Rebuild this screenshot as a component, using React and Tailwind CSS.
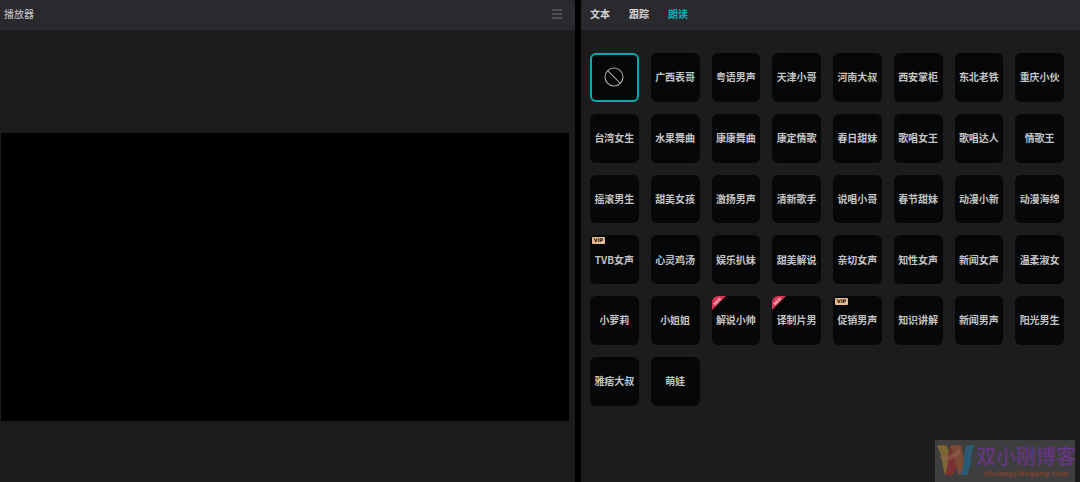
import { useState } from "react";
import clsx from "clsx";

const TABS = ["文本", "跟踪", "朗读"];

const VOICES = [
    { name: "无", none: true },
    { name: "广西表哥" },
    { name: "粤语男声" },
    { name: "天津小哥" },
    { name: "河南大叔" },
    { name: "西安掌柜" },
    { name: "东北老铁" },
    { name: "重庆小伙" },
    { name: "台湾女生" },
    { name: "水果舞曲" },
    { name: "康康舞曲" },
    { name: "康定情歌" },
    { name: "春日甜妹" },
    { name: "歌唱女王" },
    { name: "歌唱达人" },
    { name: "情歌王" },
    { name: "摇滚男生" },
    { name: "甜美女孩" },
    { name: "激扬男声" },
    { name: "清新歌手" },
    { name: "说唱小哥" },
    { name: "春节甜妹" },
    { name: "动漫小新" },
    { name: "动漫海绵" },
    { name: "TVB女声", badge: "vip" },
    { name: "心灵鸡汤" },
    { name: "娱乐扒妹" },
    { name: "甜美解说" },
    { name: "亲切女声" },
    { name: "知性女声" },
    { name: "新闻女声" },
    { name: "温柔淑女" },
    { name: "小萝莉" },
    { name: "小姐姐" },
    { name: "解说小帅", badge: "new" },
    { name: "译制片男", badge: "new" },
    { name: "促销男声", badge: "vip" },
    { name: "知识讲解" },
    { name: "新闻男声" },
    { name: "阳光男生" },
    { name: "雅痞大叔" },
    { name: "萌娃" },
];

function NoneIcon() {
    return (
        <svg viewBox="0 0 20 20" className="size-5" fill="none" stroke="#a8a8a9" strokeWidth="1.1" aria-hidden="true">
            <circle cx="10" cy="10" r="9" />
            <path d="M3.6 3.6 16.4 16.4" />
        </svg>
    );
}

function VipBadge() {
    return (
        <span className="absolute top-0.5 left-0.5 flex h-[7px] w-[13px] items-center justify-center rounded-[1px] bg-[#e6bd92] font-['DejaVu_Sans'] text-[5px] leading-none font-bold text-[#1c1208]">
            VIP
        </span>
    );
}

function NewBadge() {
    return (
        <span className="absolute top-0 left-0 size-[14px]">
            <svg viewBox="0 0 14 14" className="absolute inset-0 size-full" aria-hidden="true">
                <path d="M3 0H14L0 14V3Q0 0 3 0Z" fill="#d63456" />
            </svg>
            <span className="absolute top-0 left-0 flex size-[10px] -rotate-45 items-center justify-center text-[4px] leading-none font-bold text-[#f7d3da]">
                NEW
            </span>
        </span>
    );
}

function VoiceTile({ voice, selected, onSelect }) {
    return (
        <button
            type="button"
            aria-label={voice.name}
            aria-pressed={selected}
            onClick={onSelect}
            className={clsx(
                "relative flex aspect-square items-center justify-center overflow-hidden rounded-md bg-[#060709] text-[10px] leading-4 font-bold whitespace-nowrap text-[#c4c4c4]",
                selected && "border-2 border-[#0aa9b1]"
            )}
        >
            {voice.badge === "vip" && <VipBadge />}
            {voice.badge === "new" && <NewBadge />}
            {voice.none ? <NoneIcon /> : voice.name}
        </button>
    );
}

function Watermark() {
    return (
        <div className="absolute right-[5px] bottom-0 flex h-[42px] w-[140px] overflow-hidden bg-[#3e3e3e] pl-px">
            <svg viewBox="0 0 40 42" className="h-[42px] w-10 shrink-0" aria-hidden="true">
                <path d="M1 6Q6 4 11 6C14 14 14 26 17 35H9C6 25 6 14 1 6Z" fill="#7a6632" />
                <path d="M14 6Q20 4 26 6C22 15 22 27 17 35H9C13 26 11 15 14 6Z" fill="#7a3034" />
                <path d="M14 6Q20 4 25 6C27 14 29 26 31 35H23C19 26 19 14 14 6Z" fill="#7c4a32" />
                <path d="M30 6Q34 4 38 5C34 14 36 26 31 35H24C29 26 27 14 30 6Z" fill="#2b5a74" />
                <path d="M3 16Q13 19 24 8L24 14Q16 22 6 20Z" fill="#946650" opacity="0.5" />
            </svg>
            <div className="flex flex-col items-center pt-1 whitespace-nowrap">
                <span className="text-[20px] leading-6 font-medium text-[#653582]">双小刚博客</span>
                <span className="font-['DejaVu_Sans'] text-[7px] leading-3 font-bold text-[#7a4230]">
                    shuangxiaogang.com
                </span>
            </div>
        </div>
    );
}

export default function App() {
    const [tab, setTab] = useState("朗读");
    const [selected, setSelected] = useState("无");

    return (
        <div className="relative grid min-h-screen grid-cols-[575fr_499fr] gap-1.5 bg-black font-['Noto_Sans_CJK_SC',sans-serif]">
            <section className="flex min-w-0 flex-col bg-[#1c1c1c]">
                <header className="flex h-[30px] items-center justify-between rounded-tr-sm bg-[#29292e] pr-3 pb-0.5 pl-1">
                    <h2 className="text-[10px] leading-4 text-[#c9c9cb]">播放器</h2>
                    <button type="button" aria-label="菜单" className="text-[#737377]">
                        <svg viewBox="0 0 12 10" className="h-[10px] w-3" stroke="currentColor" strokeWidth="1" aria-hidden="true">
                            <path d="M1 1H11M1 5H11M1 9H11" />
                        </svg>
                    </button>
                </header>
                <div className="flex flex-1 items-center pt-[42px] pr-1.5 pl-px">
                    <div className="aspect-[71/36] w-full bg-black" />
                </div>
            </section>

            <section className="min-w-0 bg-[#1c1c1c]">
                <nav className="flex h-[30px] items-center gap-[19px] rounded-tl-sm bg-[#29292e] pb-0.5 pl-[9px]">
                    {TABS.map((item) => (
                        <button
                            key={item}
                            type="button"
                            onClick={() => setTab(item)}
                            className={clsx(
                                "text-[10px] leading-4 font-bold",
                                item === tab ? "text-[#0cb0b8]" : "text-[#d6d6d8]"
                            )}
                        >
                            {item}
                        </button>
                    ))}
                </nav>
                <div className="grid grid-cols-8 gap-3 pt-[23px] pr-4 pb-6 pl-[9px]">
                    {VOICES.map((voice) => (
                        <VoiceTile
                            key={voice.name}
                            voice={voice}
                            selected={voice.name === selected}
                            onSelect={() => setSelected(voice.name)}
                        />
                    ))}
                </div>
            </section>

            <Watermark />
        </div>
    );
}
